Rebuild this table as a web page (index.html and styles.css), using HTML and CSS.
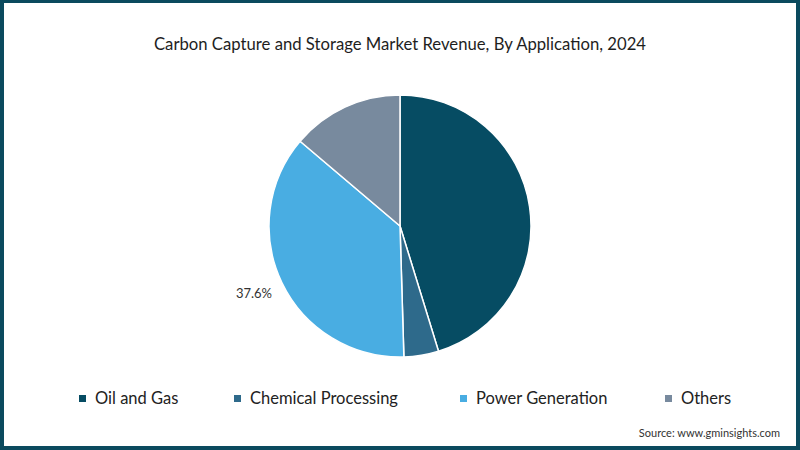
FILE: index.html
```html
<!DOCTYPE html>
<html lang="en">
<head>
<meta charset="utf-8">
<title>Carbon Capture and Storage Market Revenue</title>
<link rel="stylesheet" href="styles.css">
</head>
<body>
<div class="frame">
  <h1 class="title">Carbon Capture and Storage Market Revenue, By Application, 2024</h1>
  <svg class="chart" width="792" height="300" viewBox="0 0 792 300">
    <g stroke="#ffffff" stroke-width="1.5" stroke-linejoin="round">
      <path fill="#064c63" d="M396,156 L396,25 A131,131 0 0,1 434.52,281.21 Z"/>
      <path fill="#2e6a8b" d="M396,156 L434.52,281.21 A131,131 0 0,1 399.89,286.94 Z"/>
      <path fill="#49ade2" d="M396,156 L399.89,286.94 A131,131 0 0,1 296.09,71.27 Z"/>
      <path fill="#788a9e" d="M396,156 L296.09,71.27 A131,131 0 0,1 396,25 Z"/>
    </g>
    <text class="pct" x="268" y="228" text-anchor="end">37.6%</text>
  </svg>
  <ul class="legend">
    <li class="item"><span class="swatch oil"></span>Oil and Gas</li>
    <li class="item"><span class="swatch chem"></span>Chemical Processing</li>
    <li class="item"><span class="swatch power"></span>Power Generation</li>
    <li class="item"><span class="swatch others"></span>Others</li>
  </ul>
  <p class="source">Source: www.gminsights.com</p>
</div>
</body>
</html>
```
FILE: styles.css
```css
* { box-sizing: border-box; }
html, body { margin: 0; padding: 0; background: #ffffff; }
.frame {
  width: 800px;
  height: 450px;
  border: 4px solid #0b4a5e;
  border-top-width: 3px;
  display: flex;
  flex-direction: column;
  font-family: "Lato", "Liberation Sans", sans-serif;
  color: #222;
  background: #fff;
}
.title {
  margin: 0;
  padding-top: 30px;
  height: 67px;
  font-size: 16.7px;
  font-weight: 400;
  line-height: 22px;
  text-align: center;
  color: #1e1e1e;
}
.chart { display: block; }
.pct { font-family: "Lato", "Liberation Sans", sans-serif; font-size: 13px; fill: #333; }
.legend {
  list-style: none;
  margin: 17px 0 0;
  padding: 0 0 0 75px;
  display: flex;
  gap: 0;
  height: 22px;
}
.item {
  display: flex;
  align-items: center;
  font-size: 16.5px;
  line-height: 22px;
  color: #222;
}
.item:nth-child(1) { width: 155px; }
.item:nth-child(2) { width: 226px; }
.item:nth-child(3) { width: 205px; }
.swatch {
  width: 7px;
  height: 7px;
  margin-right: 9px;
  display: inline-block;
}
.oil { background: #064c63; }
.chem { background: #2e6a8b; }
.power { background: #49ade2; }
.others { background: #788a9e; }
.source {
  margin: 17px 16px 0 0;
  text-align: right;
  font-size: 11px;
  line-height: 14px;
  color: #333;
}
```
